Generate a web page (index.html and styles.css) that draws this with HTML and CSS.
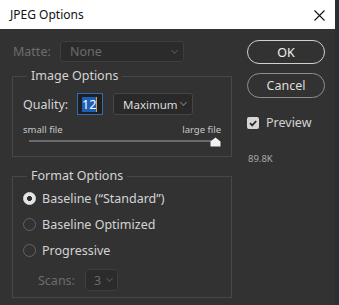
FILE: index.html
```html
<!doctype html>
<html>
<head>
  <title>JPEG Options</title>
  <meta charset='UTF-8'>
  <link rel="stylesheet" href="styles.css">
</head>
<body>
  <div class='dialog'>
    <header class='titlebar'>
      <span class='title'>JPEG Options</span>
      <svg class='close' width='11' height='11' viewBox='0 0 11 11'><path d='M0.5 0.5 L10.5 10.5 M10.5 0.5 L0.5 10.5' stroke='#111' stroke-width='1.1' fill='none'/></svg>
    </header>
    <main class='content'>
      <div class='left'>
        <div class='matte'>
          <span class='lbl dim'>Matte:</span>
          <div class='select matte-sel dim'><span>None</span><i class='chev'></i></div>
        </div>
        <fieldset class='group image-opts'>
          <legend>Image Options</legend>
          <div class='quality'>
            <span class='lbl'>Quality:</span>
            <div class='num'><span class='sel-text'>12</span><span class='caret'></span></div>
            <div class='select quality-sel'><span>Maximum</span><i class='chev'></i></div>
          </div>
          <div class='scale'><span>small file</span><span>large file</span></div>
          <div class='slider'>
            <div class='track'></div>
            <svg class='thumb' width='11' height='10' viewBox='0 0 11 10'><path d='M0.5 4.5 L5.5 0.5 L10.5 4.5 L10.5 9.5 L0.5 9.5 Z' fill='#f2f2f2'/></svg>
          </div>
        </fieldset>
        <fieldset class='group format-opts'>
          <legend>Format Options</legend>
          <div class='radio on'><i></i><span>Baseline (“Standard”)</span></div>
          <div class='radio'><i></i><span>Baseline Optimized</span></div>
          <div class='radio'><i></i><span>Progressive</span></div>
          <div class='scans'>
            <span class='lbl dim'>Scans:</span>
            <div class='select scans-sel dim'><span>3</span><i class='chev'></i></div>
          </div>
        </fieldset>
      </div>
      <div class='right'>
        <button class='btn primary'>OK</button>
        <button class='btn'>Cancel</button>
        <label class='check'>
          <span class='box'><svg width='12' height='12' viewBox='0 0 12 12'><path d='M3 6.2 L5.2 8.4 L9.2 4' stroke='#2a2a2a' stroke-width='1.8' fill='none'/></svg></span>
          <span>Preview</span>
        </label>
        <div class='size'>89.8K</div>
      </div>
    </main>
  </div>
</body>
</html>
```

FILE: styles.css
```css
html, body { margin: 0; height: 100% }
body {
  background: #283036;
  font-family: "Noto Sans", "Open Sans", sans-serif;
  color: #d4d4d4;
}
.dialog {
  width: 335px;
  height: 305px;
  background: #323232;
  display: flex;
  flex-direction: column;
}
.titlebar {
  height: 29px;
  background: #fff;
  display: flex;
  align-items: center;
  justify-content: space-between;
  padding: 0 10px 0 10px;
  box-sizing: border-box;
  flex: none;
}
.title { font-size: 12px; color: #111 }
.close { margin-top: 1px }
.content {
  display: flex;
  padding: 0 0 0 12px;
}
.left { width: 220px }
.right {
  margin-left: 15px;
  width: 78px;
  padding-top: 11px;
  display: flex;
  flex-direction: column;
}
.lbl { font-size: 12.5px }
.dim { color: #6c6c6c }
.matte {
  display: flex;
  align-items: center;
  margin-top: 12px;
  height: 21px;
}
.matte .lbl { width: 47px; padding-left: 1px }
.select {
  box-sizing: border-box;
  display: flex;
  align-items: center;
  justify-content: space-between;
  border: 1px solid #3e3e3e;
  border-radius: 3px;
  background: #2b2b2b;
  font-size: 12.5px;
  padding: 0 6px 0 9px;
}
.matte-sel { width: 124px; height: 21px }
.chev {
  width: 4px;
  height: 4px;
  border-right: 1px solid #777;
  border-bottom: 1px solid #777;
  transform: rotate(45deg);
  margin-top: -3px;
  flex: none;
}
.dim .chev { border-color: #555 }
.group {
  margin: 6px 0 0 0;
  border: 1px solid #474747;
  padding: 0 10px;
}
.group legend {
  font-size: 12.5px;
  line-height: 16px;
  padding: 0 4px;
  margin-left: 4px;
  color: #d4d4d4;
}
.image-opts { padding-top: 9px; padding-bottom: 8px }
.quality {
  display: flex;
  align-items: center;
  height: 22px;
}
.quality .lbl { width: 54px }
.num {
  box-sizing: border-box;
  width: 26px;
  height: 22px;
  border: 1px solid #2e6cb4;
  background: #1f1f1f;
  display: flex;
  align-items: center;
  padding-left: 4px;
  font-size: 12.5px;
}
.sel-text { background: #1e5fb6; color: #fff; line-height: 15px }
.caret { width: 1px; height: 15px; background: #c8a070 }
.quality-sel {
  margin-left: 10px;
  width: 80px;
  height: 22px;
  background: #292929;
  border-color: #464646;
  color: #dcdcdc;
  font-size: 11.5px;
  padding: 0 6px 0 9px;
}
.scale {
  display: flex;
  justify-content: space-between;
  font-size: 9.5px;
  line-height: 12px;
  margin-top: 9px;
  color: #c8c8c8;
}
.slider {
  position: relative;
  height: 12px;
  margin: 0 5px 0 6px;
}
.track {
  position: absolute;
  left: 0;
  right: 0;
  top: 4px;
  height: 2px;
  background: #6a6a6a;
}
.thumb { position: absolute; right: -5px; top: 1px }
.format-opts { margin-top: 11px; padding-top: 1px; padding-bottom: 6px }
.radio {
  display: flex;
  align-items: center;
  height: 26px;
  font-size: 12.5px;
}
.radio i {
  box-sizing: border-box;
  width: 13px;
  height: 13px;
  border-radius: 50%;
  border: 1px solid #646464;
  margin-right: 6px;
}
.radio.on i {
  border-color: #e4e4e4;
  background: radial-gradient(circle, #2f2f2f 0 2.2px, #e4e4e4 2.8px);
}
.scans {
  display: flex;
  align-items: center;
  height: 22px;
  margin-top: 6px;
  padding-left: 15px;
}
.scans .lbl { width: 47px }
.scans-sel { width: 33px; height: 22px; padding: 0 5px 0 8px }
.btn {
  box-sizing: border-box;
  width: 78px;
  border-radius: 13px;
  background: transparent;
  border: 1.5px solid #8e8e8e;
  color: #dedede;
  font-family: inherit;
  font-size: 12.5px;
  padding: 0;
}
.btn.primary { height: 24px; border-color: #d0d0d0; color: #f0f0f0 }
.btn + .btn { height: 25px; margin-top: 9px }
.check {
  display: flex;
  align-items: center;
  margin-top: 16px;
  font-size: 12.5px;
}
.box {
  width: 12px;
  height: 12px;
  border-radius: 2px;
  background: #d6d6d6;
  margin-right: 7px;
  display: flex;
}
.size {
  margin-top: 21px;
  font-size: 9.5px;
  color: #a8a8a8;
  padding-left: 1px;
}
```
